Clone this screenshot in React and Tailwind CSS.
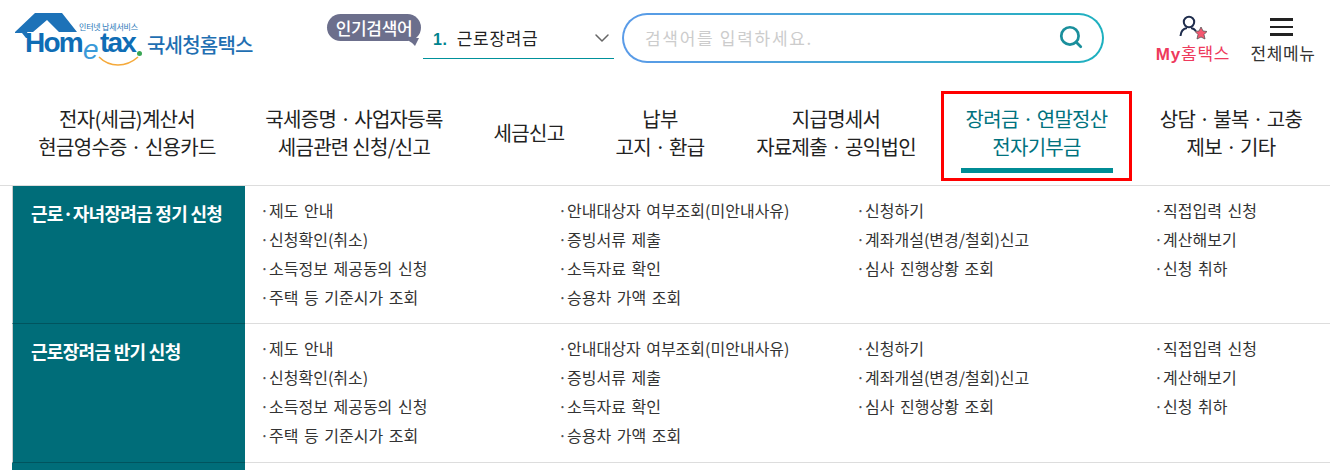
import { ChevronDown, Search } from "lucide-react";

const navItems = [
  { lines: ["전자(세금)계산서", "현금영수증 · 신용카드"], w: "w-[254px]" },
  { lines: ["국세증명 · 사업자등록", "세금관련 신청/신고"], w: "w-[200px]" },
  { lines: ["세금신고"], w: "w-[150px]" },
  { lines: ["납부", "고지 · 환급"], w: "w-[112px]" },
  { lines: ["지급명세서", "자료제출 · 공익법인"], w: "w-[240px]" },
];

const links = [
  ["제도 안내", "안내대상자 여부조회(미안내사유)", "신청하기", "직접입력 신청"],
  ["신청확인(취소)", "증빙서류 제출", "계좌개설(변경/철회)신고", "계산해보기"],
  ["소득정보 제공동의 신청", "소득자료 확인", "심사 진행상황 조회", "신청 취하"],
  ["주택 등 기준시가 조회", "승용차 가액 조회"],
];

const Logo = () => (
  <div className="relative w-[327px] h-[70px] shrink-0">
    <svg className="absolute left-[14px] top-[12px]" width="66" height="36" viewBox="0 0 66 36">
      <path d="M1 20 L21 1 H48 L63 20 H45 L33 8 L19 20 H13 L16 26 H12 L8 21 H1 Z" fill="#1d72b8" />
    </svg>
    <span className="absolute left-[79px] top-[22px] text-[8px] leading-[10px] tracking-[-0.2px] text-[#2a78b8] whitespace-nowrap">인터넷 납세서비스</span>
    <span className="absolute left-[25px] top-[32px] text-[28px] leading-[22px] font-bold tracking-[-1.8px] text-[#0f6db5] font-['Liberation_Sans',sans-serif]">Hom</span>
    <span className="absolute left-[83px] top-[38px] text-[28px] leading-[24px] italic text-[#3a9ad9] font-['Liberation_Sans',sans-serif]">e</span>
    <span className="absolute left-[100px] top-[32px] text-[28px] leading-[22px] font-bold tracking-[-1.8px] text-[#0f6db5] font-['Liberation_Sans',sans-serif]">tax</span>
    <span className="absolute left-[137px] top-[51px] w-[5px] h-[5px] rounded-full bg-[#3aa655]"></span>
    <svg className="absolute left-[98px] top-[55px]" width="42" height="12" viewBox="0 0 42 12">
      <path d="M1 2 Q9 10 20 10 Q31 10 40 2" fill="none" stroke="#f5a93a" strokeWidth="1.6" />
    </svg>
    <span className="absolute left-[147px] top-[32px] text-[20px] leading-[26px] font-medium tracking-[-0.8px] text-[#1f6fb2] whitespace-nowrap">국세청홈택스</span>
  </div>
);

const Section = ({ title, height }) => (
  <div className={"flex ml-3 " + height}>
    <div className="w-[233px] shrink-0 bg-[#006d79] border-l border-b border-l-[#cccccc] border-b-[#00545e] pl-[18px] pt-[13px] text-[18px] leading-[28px] font-bold tracking-[-0.7px] text-white">
      {title}
    </div>
    <div className="flex-1 pl-[15px] pt-[10px] border-b border-[#dddddd]">
      {links.map((row, i) => (
        <div key={i} className="grid grid-cols-[298px_298px_298px_1fr] h-[29px] text-[16px] leading-[29px] [word-spacing:2px] text-[#333333]">
          {row.map((label) => (
            <span key={label} className="whitespace-nowrap">
              <span className="inline-block w-[9px] text-[#555555]">·</span>
              {label}
            </span>
          ))}
        </div>
      ))}
    </div>
  </div>
);

export default function App() {
  return (
    <div className="w-[1330px] h-[470px] overflow-hidden bg-white font-['Noto_Sans_CJK_KR','Noto_Sans',sans-serif]">
      <header className="flex items-start h-[85px]">
        <Logo />
        <div className="relative w-[94px] h-[27px] mt-[14px] shrink-0 rounded-[14px] bg-[#6c6f8c] text-center text-[17px] leading-[27px] font-medium tracking-[-0.3px] text-white">
          인기검색어
          <svg className="absolute right-[2px] top-[24px]" width="10" height="9" viewBox="0 0 10 9">
            <path d="M0 0 H10 L6 8 Q4 5 0 3 Z" fill="#6c6f8c" />
          </svg>
        </div>
        <div className="ml-[2px] w-[191px] h-[45px] mt-[14px] pt-[4px] flex items-center justify-between border-b border-[#00919b] pl-[10px] shrink-0">
          <span className="text-[17px] text-[#222222] tracking-[0.7px] whitespace-nowrap">
            <b className="text-[#00838f] mr-[9px] text-[16px] font-['Liberation_Sans',sans-serif]">1.</b>근로장려금
          </span>
          <ChevronDown size={24} className="text-[#666666]" strokeWidth={1.5} />
        </div>
        <div className="ml-2 mt-[13px] w-[482px] h-[50px] shrink-0 rounded-[25px] p-[2px] bg-gradient-to-r from-[#5a9be8] to-[#1cb0bf]">
          <div className="flex items-center justify-between h-full rounded-[23px] bg-white pl-[21px] pr-[18px]">
            <span className="text-[17px] tracking-[1.7px] text-[#cccccc] whitespace-nowrap">검색어를 입력하세요.</span>
            <Search size={26} className="text-[#1a8f9c] -translate-y-[1px]" strokeWidth={2.5} />
          </div>
        </div>
        <div className="ml-[51px] mt-[14px] flex flex-col items-center w-[76px] shrink-0">
          <svg className="-translate-x-[1px]" width="30" height="26" viewBox="0 0 30 26">
            <circle cx="12" cy="8" r="5.2" fill="none" stroke="#1f2d4d" strokeWidth="2" />
            <path d="M3.5 22 Q4 15 10 14 M14 14 Q17 14.5 19 17" fill="none" stroke="#1f2d4d" strokeWidth="2" />
            <path d="M24 13 L26 17 L30 17.5 L27 20.5 L28 25 L24 23 L20 25 L21 20.5 L18 17.5 L22 17 Z" fill="#f4566f" stroke="#555555" strokeWidth="0.8" />
          </svg>
          <span className="text-[17px] leading-[26px] tracking-[0.8px] whitespace-nowrap text-[#ee3a5c]"><b className="font-['Liberation_Sans',sans-serif]">My</b>홈택스</span>
        </div>
        <div className="ml-[19px] mt-[14px] flex flex-col items-center w-[66px] shrink-0">
          <div className="flex flex-col gap-[5px] pt-[4px] h-[26px] w-[23px] -translate-x-[2px]">
            <i className="block h-[2.5px] bg-[#222222]"></i>
            <i className="block h-[2.5px] bg-[#222222]"></i>
            <i className="block h-[2.5px] bg-[#222222]"></i>
          </div>
          <span className="text-[17px] leading-[26px] tracking-[0.6px] whitespace-nowrap text-[#333333]">전체메뉴</span>
        </div>
      </header>

      <nav className="flex items-center h-[101px] pb-[4px] border-b border-[#dddddd] text-[20px] leading-[28px] tracking-[-0.7px] text-[#222222] text-center">
        {navItems.map((item) => (
          <div key={item.lines[0]} className={item.w + " shrink-0"}>
            {item.lines.map((l) => <div key={l} className="whitespace-nowrap">{l}</div>)}
          </div>
        ))}
        <div className="w-[191px] h-[90px] shrink-0 ml-[-15px] mt-[6px] self-start border-[3px] border-[#ff0000] flex flex-col items-center pt-[11px] text-[#00727e]">
          <div className="whitespace-nowrap">장려금 · 연말정산</div>
          <div className="whitespace-nowrap">전자기부금</div>
          <div className="w-[152px] h-[5px] mt-[7px] bg-[#008c95]"></div>
        </div>
        <div className="flex-1">
          <div className="whitespace-nowrap">상담 · 불복 · 고충</div>
          <div className="whitespace-nowrap">제보 · 기타</div>
        </div>
      </nav>

      <Section title="근로·자녀장려금 정기 신청" height="h-[138px]" />
      <Section title="근로장려금 반기 신청" height="h-[139px]" />
      <div className="ml-3 w-[233px] h-[20px] bg-[#006d79]"></div>
    </div>
  );
}
